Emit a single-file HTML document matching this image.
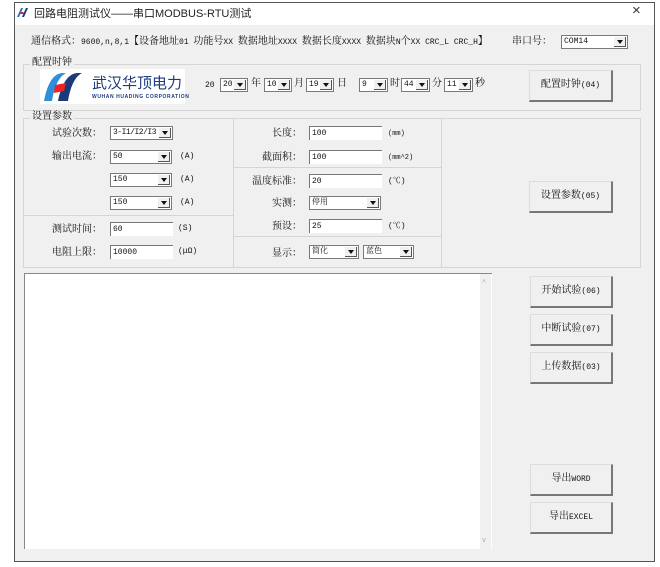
<!DOCTYPE html>
<html><head><meta charset="utf-8"><style>
*{box-sizing:border-box;margin:0;padding:0}
body{width:660px;height:567px;background:#fff;position:relative;overflow:hidden;font-family:"Liberation Mono","Noto Serif CJK SC",monospace;font-size:8px;color:#111}
.a{position:absolute}
.win{left:14px;top:2px;width:641px;height:560px;border:1px solid #555;background:#f0f0f0}
.title{left:15px;top:3px;width:639px;height:22px;background:#fff}
.t{position:absolute;white-space:nowrap;line-height:12px}
.c{font-size:10px}
.grp{position:absolute;border:1px solid #d5d5d5}
.gl{position:absolute;background:#f0f0f0;padding:0 2px;top:-7px;left:6px;line-height:12px;font-size:10px}
.in{position:absolute;background:#fff;border-top:1px solid #777;border-left:1px solid #777;height:14px;line-height:13px;padding-left:2px;font-size:8px}
.cb{position:absolute;background:#fff;border:1px solid #7a7a7a;height:14px;line-height:12px;padding-left:2px;font-size:8px;overflow:hidden}
.cb i{position:absolute;right:1px;top:1px;width:12px;height:10px;background:#f0f0f0;border-right:1px solid #555;border-bottom:1px solid #555}
.cb i:after{content:"";position:absolute;left:3px;top:3px;border-left:3px solid transparent;border-right:3px solid transparent;border-top:4px solid #111}
.btn{position:absolute;background:#f0f0f0;border:1px solid #dcdcdc;border-right:2px solid #777;border-bottom:2px solid #777;text-align:center;font-size:8px}
.btn b{font-weight:normal;font-size:10px}
.r{text-align:right;margin-top:2px}
.hl{position:absolute;height:1px;background:#d5d5d5}
.vl{position:absolute;width:1px;background:#d5d5d5}
</style></head><body>
<div class="a win"></div>
<div class="a title"></div>
<svg class="a" style="left:16px;top:7px" width="13" height="12" viewBox="0 0 13 12"><rect width="13" height="12" fill="#fff"/><path d="M1 10 L5 1 H7 L3 10Z" fill="#2a70c0"/><path d="M6 10 L10 1 H12 L8 10Z" fill="#1a3570"/><rect x="4.5" y="5" width="3" height="2" fill="#d22"/></svg>
<div class="t" style="left:34px;top:8px;font-family:'Liberation Sans','Noto Sans CJK SC',sans-serif;font-size:11px;color:#222">回路电阻测试仪——串口MODBUS-RTU测试</div>
<div class="t" style="left:632px;top:5px;font-family:'Liberation Sans',sans-serif;font-size:15px;color:#333">×</div>

<div class="t" style="left:31px;top:37px"><span class="c">通信格式：</span>9600,n,8,1<span class="c">【设备地址</span>01 <span class="c">功能号</span>XX <span class="c">数据地址</span>XXXX <span class="c">数据长度</span>XXXX <span class="c">数据块</span>N<span class="c">个</span>XX CRC_L CRC_H<span class="c">】</span></div>
<div class="t c" style="left:512px;top:37px">串口号：</div>
<div class="cb" style="left:561px;top:35px;width:67px">COM14<i></i></div>

<div class="grp" style="left:23px;top:64px;width:618px;height:47px"><div class="gl">配置时钟</div></div>
<div class="a" style="left:40px;top:69px;width:145px;height:35px;background:#fff"></div>
<svg class="a" style="left:42px;top:71px" width="42" height="31" viewBox="0 0 42 31"><path d="M2 30 C5 15 10 3 20 2 L24 2 C16 6 12 18 10 30Z" fill="#2f8fd8"/><path d="M16 30 C19 15 25 3 35 2 L40 2 C32 6 28 18 26 30Z" fill="#1c3a7a"/><path d="M13 14 L24 12 L22 20 L12 22Z" fill="#e22"/></svg>
<div class="t" style="left:92px;top:73px;font-family:'Noto Sans CJK SC',sans-serif;font-size:15px;line-height:19px;color:#1c3a80">武汉华顶电力</div>
<div class="t" style="left:92px;top:94px;font-family:'Liberation Sans',sans-serif;font-size:5px;line-height:6px;color:#1c3a80;font-weight:bold;letter-spacing:0.6px">WUHAN HUADING CORPORATION</div>

<div class="t" style="left:205px;top:80px">20</div>
<div class="cb" style="left:220px;top:78px;width:28px">20<i></i></div>
<div class="t c" style="left:251px;top:79px">年</div>
<div class="cb" style="left:264px;top:78px;width:28px">10<i></i></div>
<div class="t c" style="left:294px;top:79px">月</div>
<div class="cb" style="left:306px;top:78px;width:28px">19<i></i></div>
<div class="t c" style="left:337px;top:79px">日</div>
<div class="cb" style="left:359px;top:78px;width:29px">9<i></i></div>
<div class="t c" style="left:390px;top:79px">时</div>
<div class="cb" style="left:401px;top:78px;width:29px">44<i></i></div>
<div class="t c" style="left:432px;top:79px">分</div>
<div class="cb" style="left:444px;top:78px;width:29px">11<i></i></div>
<div class="t c" style="left:475px;top:79px">秒</div>
<div class="btn" style="left:529px;top:70px;width:84px;height:32px;line-height:29px"><b>配置时钟</b>(04)</div>

<div class="grp" style="left:23px;top:118px;width:618px;height:150px"><div class="gl">设置参数</div></div>
<div class="vl" style="left:233px;top:118px;height:150px"></div>
<div class="vl" style="left:441px;top:118px;height:150px"></div>
<div class="hl" style="left:23px;top:215px;width:210px"></div>
<div class="hl" style="left:233px;top:167px;width:208px"></div>
<div class="hl" style="left:233px;top:236px;width:208px"></div>

<div class="t r c" style="left:40px;width:62px;top:127px">试验次数：</div>
<div class="cb" style="left:110px;top:126px;width:63px;letter-spacing:-0.5px">3-I1/I2/I3<i></i></div>
<div class="t r c" style="left:40px;width:62px;top:150px">输出电流：</div>
<div class="cb" style="left:110px;top:150px;width:62px">50<i></i></div>
<div class="t" style="left:180px;top:151px">(A)</div>
<div class="cb" style="left:110px;top:173px;width:62px">150<i></i></div>
<div class="t" style="left:180px;top:174px">(A)</div>
<div class="cb" style="left:110px;top:196px;width:62px">150<i></i></div>
<div class="t" style="left:180px;top:197px">(A)</div>
<div class="t r c" style="left:40px;width:62px;top:223px">测试时间：</div>
<div class="in" style="left:110px;top:222px;width:63px">60</div>
<div class="t" style="left:178px;top:223px">(S)</div>
<div class="t r c" style="left:40px;width:62px;top:246px">电阻上限：</div>
<div class="in" style="left:110px;top:245px;width:63px">10000</div>
<div class="t" style="left:178px;top:246px">(μΩ)</div>

<div class="t r c" style="left:240px;width:62px;top:127px">长度：</div>
<div class="in" style="left:309px;top:126px;width:73px">100</div>
<div class="t" style="left:388px;top:128px;font-size:7px">(mm)</div>
<div class="t r c" style="left:240px;width:62px;top:151px">截面积：</div>
<div class="in" style="left:309px;top:150px;width:73px">100</div>
<div class="t" style="left:388px;top:152px;font-size:7px">(mm^2)</div>
<div class="t r c" style="left:240px;width:62px;top:175px">温度标准：</div>
<div class="in" style="left:309px;top:174px;width:73px">20</div>
<div class="t" style="left:388px;top:176px">(℃)</div>
<div class="t r c" style="left:240px;width:62px;top:197px">实测：</div>
<div class="cb c" style="left:309px;top:196px;width:72px">停用<i></i></div>
<div class="t r c" style="left:240px;width:62px;top:220px">预设：</div>
<div class="in" style="left:309px;top:219px;width:73px">25</div>
<div class="t" style="left:388px;top:221px">(℃)</div>
<div class="t r c" style="left:240px;width:62px;top:247px">显示：</div>
<div class="cb c" style="left:309px;top:245px;width:50px">简化<i></i></div>
<div class="cb c" style="left:363px;top:245px;width:51px">蓝色<i></i></div>
<div class="btn" style="left:529px;top:181px;width:84px;height:32px;line-height:29px"><b>设置参数</b>(05)</div>

<div class="a" style="left:24px;top:273px;width:468px;height:276px;background:#fff;border-top:1px solid #888;border-left:1px solid #888"></div>
<div class="a" style="left:480px;top:274px;width:11px;height:275px;background:#f0f0f0"></div>
<div class="t" style="left:482px;top:277px;font-size:7px;color:#aaa">^</div>
<div class="t" style="left:482px;top:535px;font-size:7px;color:#aaa">v</div>

<div class="btn" style="left:530px;top:276px;width:83px;height:32px;line-height:29px"><b>开始试验</b>(06)</div>
<div class="btn" style="left:530px;top:314px;width:83px;height:32px;line-height:29px"><b>中断试验</b>(07)</div>
<div class="btn" style="left:530px;top:352px;width:83px;height:32px;line-height:29px"><b>上传数据</b>(03)</div>
<div class="btn" style="left:530px;top:464px;width:83px;height:32px;line-height:29px"><b>导出</b>WORD</div>
<div class="btn" style="left:530px;top:502px;width:83px;height:32px;line-height:29px"><b>导出</b>EXCEL</div>
</body></html>
